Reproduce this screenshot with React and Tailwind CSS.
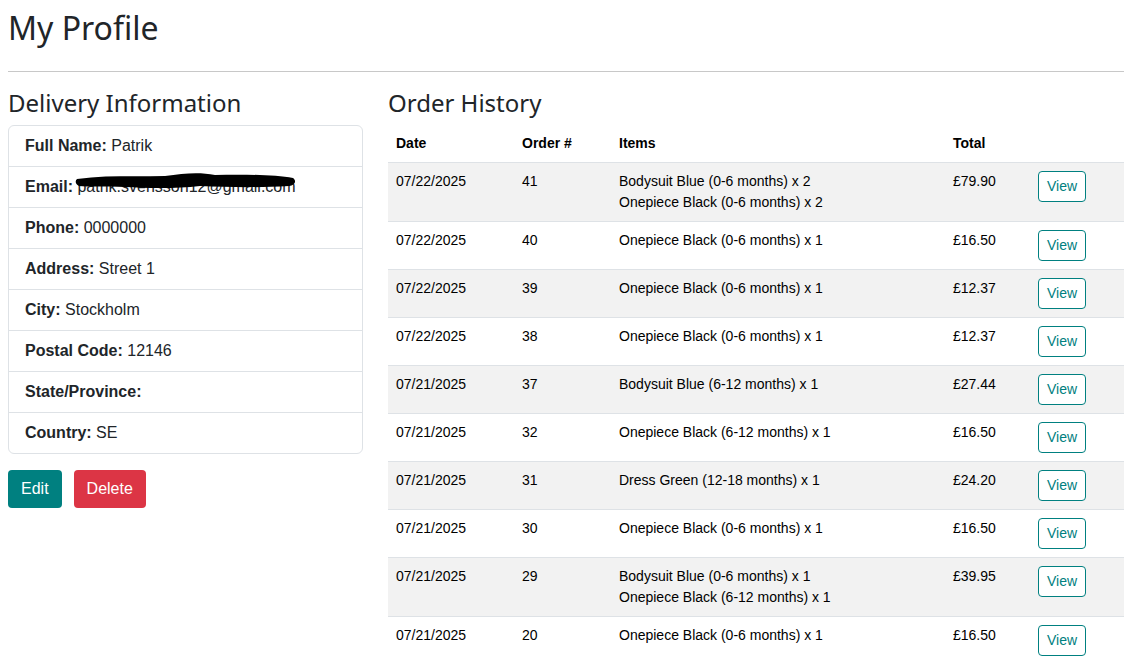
const heading = { fontFamily: '"Noto Sans", "Lato", sans-serif' };
const body = { fontFamily: '"Liberation Sans", Arial, sans-serif' };

const info = [
  ["Full Name:", "Patrik"],
  ["Email:", "email"],
  ["Phone:", "0000000"],
  ["Address:", "Street 1"],
  ["City:", "Stockholm"],
  ["Postal Code:", "12146"],
  ["State/Province:", ""],
  ["Country:", "SE"],
];

const orders = [
  ["07/22/2025", "41", ["Bodysuit Blue (0-6 months) x 2", "Onepiece Black (0-6 months) x 2"], "£79.90"],
  ["07/22/2025", "40", ["Onepiece Black (0-6 months) x 1"], "£16.50"],
  ["07/22/2025", "39", ["Onepiece Black (0-6 months) x 1"], "£12.37"],
  ["07/22/2025", "38", ["Onepiece Black (0-6 months) x 1"], "£12.37"],
  ["07/21/2025", "37", ["Bodysuit Blue (6-12 months) x 1"], "£27.44"],
  ["07/21/2025", "32", ["Onepiece Black (6-12 months) x 1"], "£16.50"],
  ["07/21/2025", "31", ["Dress Green (12-18 months) x 1"], "£24.20"],
  ["07/21/2025", "30", ["Onepiece Black (0-6 months) x 1"], "£16.50"],
  ["07/21/2025", "29", ["Bodysuit Blue (0-6 months) x 1", "Onepiece Black (6-12 months) x 1"], "£39.95"],
  ["07/21/2025", "20", ["Onepiece Black (0-6 months) x 1"], "£16.50"],
];

function Email() {
  return (
    <span className="relative inline-block">
      <span>patrik.svensson12@gmail.com</span>
      <svg className="absolute left-[-2px] top-[-4px]" width="222" height="22" viewBox="0 0 222 22">
        <path d="M2 8 C30 4 60 6 90 5 C110 2 125 1 140 4 C170 3 200 4 218 7 C222 10 220 14 214 15 C180 17 150 16 125 15 C100 18 70 17 50 16 C30 15 12 16 4 15 C0 13 0 10 2 8 Z" fill="#000" />
      </svg>
    </span>
  );
}

export default function App() {
  return (
    <div className="bg-white text-[#212529] pl-2 pr-[2px] pb-4" style={body}>
      <h1 className="text-[32px] leading-[1.2] pt-[9px] pb-[24px] font-normal" style={heading}>My Profile</h1>
      <hr className="border-t border-[#c8c8c8] mb-[17px]" />
      <div className="grid grid-cols-[355px_1fr] gap-[25px]">
        <div>
          <h2 className="text-[24px] leading-[1.2] mb-[7px] font-normal" style={heading}>Delivery Information</h2>
          <div className="border border-[#dee2e6] rounded-md">
            {info.map(([k, v], i) => (
              <div key={k} className={`px-4 py-2 leading-6 text-[16px] ${i > 0 ? "border-t border-[#dee2e6]" : ""}`}>
                <span className="font-bold">{k}</span> {v === "email" ? <Email /> : v}
              </div>
            ))}
          </div>
          <div className="flex gap-3 mt-4">
            <button className="bg-[#008080] text-white rounded px-[13px] py-[6px] leading-[26px] text-[16px]">Edit</button>
            <button className="bg-[#dc3545] text-white rounded px-[13px] py-[6px] leading-[26px] text-[16px]">Delete</button>
          </div>
        </div>
        <div>
          <h2 className="text-[24px] leading-[1.2] mb-[7px] font-normal" style={heading}>Order History</h2>
          <table className="w-full text-[14px] leading-[21px] text-black border-collapse">
            <thead>
              <tr className="border-b border-[#dee2e6] text-left">
                <th className="w-[126px] px-2 py-2 font-bold">Date</th>
                <th className="w-[97px] px-2 py-2 font-bold">Order #</th>
                <th className="w-[334px] px-2 py-2 font-bold">Items</th>
                <th className="w-[85px] px-2 py-2 font-bold">Total</th>
                <th className="px-2 py-2"></th>
              </tr>
            </thead>
            <tbody>
              {orders.map(([d, n, items, t], i) => (
                <tr key={n} className={`border-b border-[#dee2e6] align-top ${i % 2 === 0 ? "bg-[#f2f2f2]" : "bg-white"}`}>
                  <td className="px-2 py-2">{d}</td>
                  <td className="px-2 py-2">{n}</td>
                  <td className="px-2 py-2">
                    {items.map((it) => (
                      <div key={it}>{it}</div>
                    ))}
                  </td>
                  <td className="px-2 py-2">{t}</td>
                  <td className="px-2 py-2">
                    <button className="bg-white border border-[#008080] text-[#008080] rounded px-[8px] py-[4px] text-[14px] leading-[21px]">View</button>
                  </td>
                </tr>
              ))}
            </tbody>
          </table>
        </div>
      </div>
    </div>
  );
}
